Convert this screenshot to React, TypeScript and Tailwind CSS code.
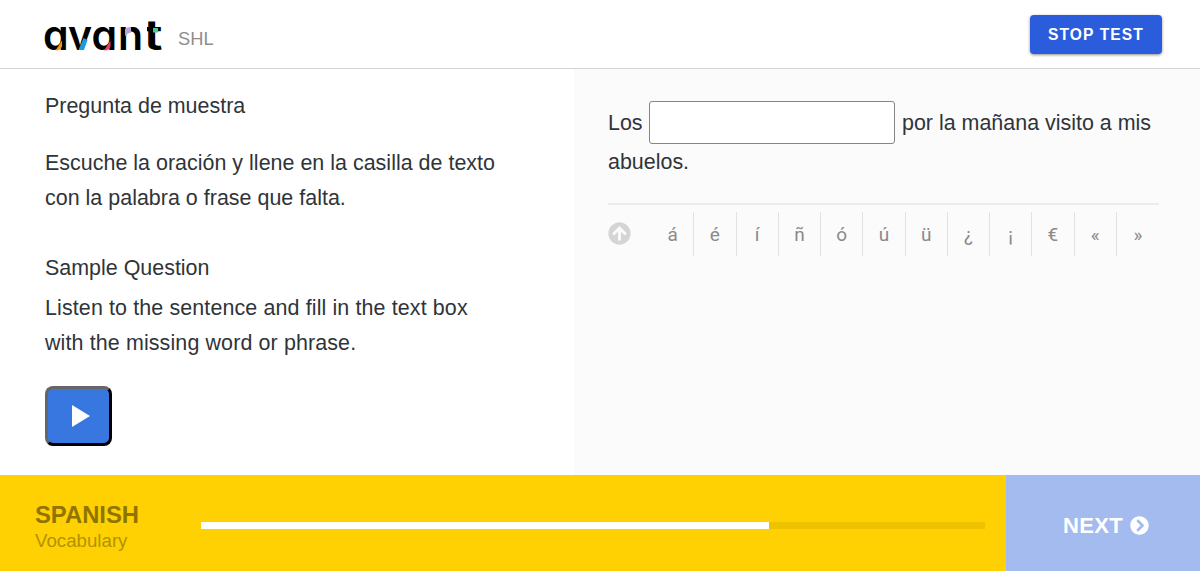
import { useState } from "react";
import { FaArrowCircleUp, FaChevronCircleRight } from "react-icons/fa";

const characters = ["á", "é", "í", "ñ", "ó", "ú", "ü", "¿", "¡", "€", "«", "»"];

function Logo() {
    return (
        <svg className="block h-10 w-[124px] overflow-visible" viewBox="0 0 124 40" role="img" aria-label="avant">
            <g className="font-['Inter',sans-serif] text-[41px] font-semibold [font-feature-settings:'cv11']">
                <text transform="translate(99.5 34) scale(1.32 1.02)">t</text>
                <path d="M98 10H103V18H98Z" fill="white" />
                <text x="-1 24 47.5 74" y="34">avan</text>
            </g>
            <path d="M11.5 34.5 L18 24.5 V30 Q17 34.5 11.5 34.5Z" fill="#f7941d" />
            <path d="M34.5 34 L39.5 22 L43.5 24 L40 34Z" fill="#1c9ce0" />
            <path d="M60 34.5 L66.5 24.5 V30 Q65.5 34.5 60 34.5Z" fill="#f0386b" />
            <path d="M81 13 Q83 11 87 11 V16.5 Q83 17 81 20Z" fill="#b9a3d8" />
            <path d="M109 12H114V16.5H109Z" fill="#3fcf8e" />
        </svg>
    )
}

function Header() {
    return (
        <header className="flex h-[69px] shrink-0 items-start justify-between border-b border-[#d4d4d4] bg-white pr-[38px] pl-11">
            <div className="flex pt-4">
                <Logo />
                <span className="ml-[10px] pt-[11px] text-[18.3px] leading-[23px] text-[#8e8e8e]">SHL</span>
            </div>
            <button className="mt-[15px] h-[39px] w-[132px] rounded bg-[#2a5cdb] pt-px text-[15.6px] font-bold tracking-[1.1px] text-white shadow-[0_1px_3px_rgba(0,0,0,0.45)]">
                STOP TEST
            </button>
        </header>
    )
}

function Instructions() {
    return (
        <section className="w-[574px] shrink-0 bg-white pt-5 pl-[45px] text-[21.45px] leading-[35px]">
            <p>Pregunta de muestra</p>
            <p className="mt-[22px] tracking-[0.015px]">
                Escuche la oración y llene en la casilla de texto
                <br />
                con la palabra o frase que falta.
            </p>
            <p className="mt-[35px]">Sample Question</p>
            <p className="mt-[5px] tracking-[0.12px]">
                Listen to the sentence and fill in the text box
                <br />
                with the missing word or phrase.
            </p>
            <button
                aria-label="Play"
                className="mt-[25px] flex h-[60px] w-[67px] items-center justify-center rounded-lg border-[3px] border-t-[#666] border-r-black border-b-black border-l-[#666] bg-[#3876e0]"
            >
                <svg className="mb-px ml-[4px] h-[22px] w-[18px]" viewBox="0 0 18 22" fill="white">
                    <path d="M0 0L18 11L0 22Z" />
                </svg>
            </button>
        </section>
    )
}

function Answer() {
    const [value, setValue] = useState("");

    return (
        <section className="grow bg-[#fbfbfb] pt-8 pr-[41px] pl-[34px]">
            <div className="text-[21.45px]">
                <div className="flex items-center whitespace-nowrap">
                    <span className="w-[41px] pt-px">Los</span>
                    <input
                        className="h-[43px] w-[246px] rounded-[3px] border border-[#858585] bg-white px-2 outline-none"
                        value={value}
                        onChange={e => setValue(e.target.value)}
                    />
                    <span className="ml-[7px] pt-px">por la mañana visito a mis</span>
                </div>
                <p className="pt-px leading-[35px]">abuelos.</p>
            </div>
            <div className="mt-[23px] flex items-start border-t-2 border-[#ececec] pt-[7px]">
                <FaArrowCircleUp className="mt-[10px] mr-5 size-[23px] shrink-0 text-[#d5d5d5]" />
                <div className="ml-px flex">
                    {
                        characters.map(c => (
                            <button
                                key={c}
                                className="h-11 w-[42.25px] border-r border-[#e2e2e2] pt-0.5 font-['Roboto',sans-serif] text-[19px] text-[#8a8a8a] last:border-r-0"
                                onClick={() => setValue(value + c)}
                            >
                                {c}
                            </button>
                        ))}
                </div>
            </div>
        </section>
    )
}

function Footer() {
    return (
        <footer className="flex h-24 shrink-0 bg-[#ffd103]">
            <div className="flex grow items-center pr-[21px] pl-[35px]">
                <div className="w-[166px] pt-[8px]">
                    <div className="text-[23.8px] leading-[27px] font-bold text-[#8f7500]">SPANISH</div>
                    <div className="text-[18.7px] leading-[25px] text-[#b39200]">Vocabulary</div>
                </div>
                <div className="mt-1 h-[7px] grow bg-[#efc200]">
                    <div className="h-full w-[72.4%] bg-white" />
                </div>
            </div>
            <button className="flex w-[194px] items-center justify-center gap-[7px] bg-[#a3bbee] pt-[5px] pl-[6px] text-[22px] font-bold tracking-[0.3px] text-white">
                NEXT
                <FaChevronCircleRight className="size-[19px]" />
            </button>
        </footer>
    )
}

export default function App() {
    return (
        <div className="flex h-[571px] w-[1200px] flex-col overflow-hidden font-['Liberation_Sans',Arial,sans-serif] text-[#2f3439]">
            <Header />
            <main className="flex grow">
                <Instructions />
                <Answer />
            </main>
            <Footer />
        </div>
    )
}
